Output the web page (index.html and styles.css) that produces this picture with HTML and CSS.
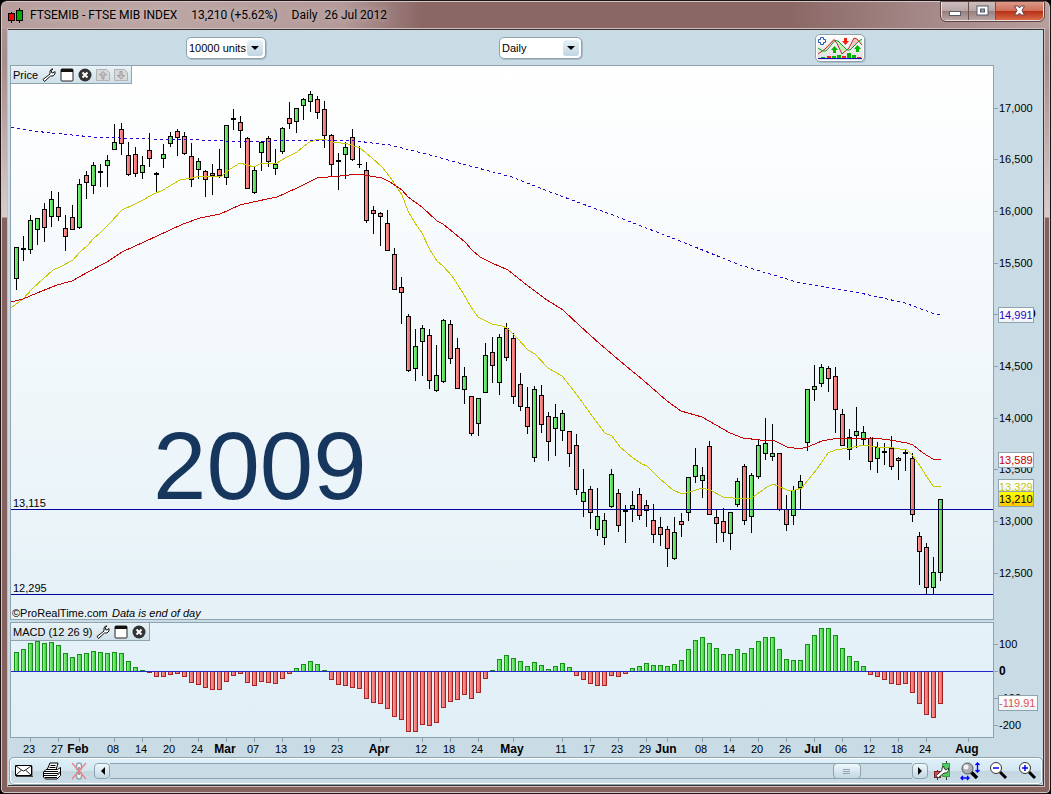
FILE: index.html
```html
<!DOCTYPE html>
<html lang="en">
<head>
<meta charset="utf-8">
<title>FTSEMIB - FTSE MIB INDEX</title>
<link rel="stylesheet" href="styles.css">
</head>
<body>
<div class="window">
  <header class="titlebar">
    <svg class="app-icon" width="16" height="16" viewBox="0 0 16 16" shape-rendering="crispEdges">
      <path d="M3 4h1v11H3zM11 0h1v15h-1z" fill="#000"/>
      <path d="M0 5h7v8H0zM8 2h7v11H8z" fill="#000"/>
      <path d="M1 6h5v6H1z" fill="#f00"/><path d="M9 3h5v9H9z" fill="#0a0"/>
    </svg>
    <h1 class="title"><span>FTSEMIB - FTSE MIB INDEX</span><span>13,210 (+5.62%)</span><span class="period">Daily</span><span class="day">26 Jul 2012</span></h1>
    <div class="window-buttons">
      <button class="win-btn minimize" aria-label="Minimize"><svg width="12" height="12"><rect x=".5" y="6.500" width="11" height="4" fill="#fff" stroke="#555d6e"/></svg></button>
      <button class="win-btn maximize" aria-label="Maximize"><svg width="13" height="12"><rect x="1" y="1" width="11" height="9" fill="#fff" stroke="#555d6e"/><rect x="4.500" y="4" width="4" height="3" fill="#a89898" stroke="#555d6e"/></svg></button>
      <button class="win-btn close" aria-label="Close"><svg width="13" height="12"><path d="M1.500 1h3.500l1.500 2L8 1h3.500L9 5.500l2.500 4.500H8L6.500 8 5 10H1.500L4 5.500z" fill="#fff" stroke="#6a4648"/></svg></button>
    </div>
  </header>

  <main class="client">
    <div class="toolbar">
      <label class="dropdown units"><select aria-label="Units"><option>10000 units</option></select><span class="arrow"></span></label>
      <label class="dropdown timeframe"><select aria-label="Timeframe"><option>Daily</option></select><span class="arrow"></span></label>
      <button class="indicator-btn" aria-label="Add indicator">
        <svg width="46" height="24" viewBox="0 0 46 24">
          <path d="M6 15L17 3.500l4 1.500-3 0-10 9zM33 14l4-12 3 1 3 4-2-1z" fill="#f8c0c2"/>
          <path d="M19 6l2-1 9 9-5 4zM1 12l5 3 3 0-5 3zM41 5l4-2v6z" fill="#bdf0bd"/>
          <path d="M1 18L8 13 17 3.500l3 4 5 10.500 7-6 5-10 3 1 5 6" fill="none" stroke="#c22a2a"/>
          <path d="M1 12l5 3h3l9-10.500 3 .5 9 9h3l9-9 3-2" fill="none" stroke="#1a9a2a"/>
          <path d="M17.500 10l3.500 4h-2v3h-3v-3h-2zM40.500 9l3.500 4h-2v3h-3v-3h-2z" fill="#00b400"/>
          <path d="M27 2h3v3h2l-3.500 4L25 5h2z" fill="#e21"/>
          <path d="M3.500 1.500h3v2h2v3h-2v2h-3v-2h-2v-3h2z" fill="#fff" stroke="#2458b8"/>
          <path d="M4 21h4v2H4zM15 20h4v3h-4zM20 19h4v4h-4zM30 17h4v6h-4zM35 19h4v4h-4z" fill="#00b000"/>
          <path d="M10 20h4v3h-4zM25 20h4v3h-4zM40 21h4v2h-4z" fill="#e22"/>
          <path d="M1 22.500h44" stroke="#1010c0"/>
        </svg>
      </button>
    </div>

    <section class="pane" aria-label="Price chart">
      <svg id="price" class="chart" viewBox="10 65 1033 557"></svg>
      <div class="pane-head">
        <span>Price</span>
        <button class="tool" aria-label="Settings"><svg width="14" height="14" viewBox="0 0 14 14"><path d="M9.500 1L8 3v3l-7 5.500 1.500 2L8.500 8H11l2-2V3.500L11 5 9.500 4.500V2.500L11 1z" fill="#fff" stroke="#111"/></svg></button>
        <button class="tool" aria-label="Maximize pane"><svg width="14" height="14" viewBox="0 0 14 14"><rect x="1" y="1" width="12" height="12" rx="1" fill="#fff" stroke="#222"/><path d="M1 1h12v3H1z" fill="#111"/></svg></button>
        <button class="tool" aria-label="Close pane"><svg width="14" height="14" viewBox="0 0 14 14"><circle cx="7" cy="7" r="6.500" fill="#333"/><path d="M4.500 4.500l5 5m0-5l-5 5" stroke="#fff" stroke-width="2"/></svg></button>
        <button class="tool" aria-label="Move up" disabled><svg width="14" height="14" viewBox="0 0 14 14"><path d="M.5 1.500h10l3 3v8H.5z" fill="#d8d8d8" stroke="#b0b4b6"/><path d="M7 3.500l3.500 3.500H8v4H6V7H3.500z" fill="#c6c8ca" stroke="#9a9ea0"/></svg></button>
        <button class="tool" aria-label="Move down" disabled><svg width="14" height="14" viewBox="0 0 14 14"><path d="M.5 1.500h10l3 3v8H.5z" fill="#d8d8d8" stroke="#b0b4b6"/><path d="M7 11l3.500-3.500H8v-4H6v4H3.500z" fill="#c6c8ca" stroke="#9a9ea0"/></svg></button>
      </div>
    </section>

    <section class="pane" aria-label="MACD chart">
      <svg id="macd" class="chart" viewBox="10 622 1033 116"></svg>
      <div class="pane-head">
        <span>MACD (12 26 9)</span>
        <button class="tool" aria-label="Settings"><svg width="14" height="14" viewBox="0 0 14 14"><path d="M9.500 1L8 3v3l-7 5.500 1.500 2L8.500 8H11l2-2V3.500L11 5 9.500 4.500V2.500L11 1z" fill="#fff" stroke="#111"/></svg></button>
        <button class="tool" aria-label="Maximize pane"><svg width="14" height="14" viewBox="0 0 14 14"><rect x="1" y="1" width="12" height="12" rx="1" fill="#fff" stroke="#222"/><path d="M1 1h12v3H1z" fill="#111"/></svg></button>
        <button class="tool" aria-label="Close pane"><svg width="14" height="14" viewBox="0 0 14 14"><circle cx="7" cy="7" r="6.500" fill="#333"/><path d="M4.500 4.500l5 5m0-5l-5 5" stroke="#fff" stroke-width="2"/></svg></button>
      </div>
    </section>

    <svg id="dates" class="chart" viewBox="10 738 1033 19"></svg>

    <footer class="bottombar">
      <button class="tool" aria-label="Mail"><svg width="18" height="14" viewBox="0 0 18 14"><path d="M.5 1.500h16v10H.5z" fill="#fff" stroke="#000"/><path d="M1 2l5.500 4L1 11M16 2l-5.500 4 5.500 5M6.500 6q2 2 4 0" fill="none" stroke="#222"/><path d="M1 12.500h17V2" fill="none" stroke="#444"/></svg></button>
      <button class="tool" aria-label="Print"><svg width="18" height="18" viewBox="0 0 18 18"><path d="M4 8L7 1h8l-2 7z" fill="#fff" stroke="#000"/><path d="M7.500 3.500h5M6.500 5.500h6" stroke="#000"/><path d="M3 7.500h11.500l3-2v8L14 17H2.500L.5 15v-5z" fill="#fff" stroke="#000"/><path d="M1 9.500h14M1 11.500h14l2-2M1 13.500h13l3-3M2 15.500h12" stroke="#000" fill="none"/></svg></button>
      <button class="tool" aria-label="Link windows" disabled><svg width="17" height="18" viewBox="0 0 17 18"><rect x="5.500" y="1" width="5" height="7" rx="2.500" fill="#eef5f8" stroke="#93a5af" stroke-width="1.500"/><rect x="5.500" y="10" width="5" height="7" rx="2.500" fill="#eef5f8" stroke="#93a5af" stroke-width="1.500"/><path d="M8 5v8" stroke="#93a5af" stroke-width="2"/><path d="M1 1l14 16M15 1L1 17" stroke="#f07f84" stroke-width="1.300"/></svg></button>
      <div class="scroller">
        <button class="scroll-btn" aria-label="Scroll left"><svg width="5" height="8"><path d="M5 0v8L1 4z"/></svg></button>
        <input class="scroll-track" type="range" min="0" max="1000" value="934" aria-label="Time position">
        <button class="scroll-btn" aria-label="Scroll right"><svg width="5" height="8"><path d="M0 0v8l4-4z"/></svg></button>
      </div>
      <div class="zoom-tools">
        <button class="tool" aria-label="Chart settings"><svg width="17" height="20" viewBox="0 0 17 20"><path d="M3.500 9v10M12.500 0v19" stroke="#333"/><rect x=".5" y="10.500" width="6" height="6" fill="#e44" stroke="#722"/><rect x="8.500" y="2.500" width="7" height="13" fill="#4fce5f" stroke="#3f9a4a"/><path d="M9.500 5L8 7v2.500L2 14.500l2 2.500 6-5h2.500l2-2.500V7L12 9l-1.500-1z" fill="#fff" stroke="#333"/></svg></button>
        <button class="tool" aria-label="Fit zoom"><svg width="20" height="20" viewBox="0 0 20 20"><path d="M11 11l6 6" stroke="#000" stroke-width="3.500"/><circle cx="7.500" cy="7.500" r="5.500" fill="#aab1b5" stroke="#555"/><circle cx="6" cy="6" r="2.500" fill="#f4f4f4"/><path d="M17.500 2v9M15.500 4l2-2 2 2M15.500 9l2 2 2-2M1 17h8M3 15l-2 2 2 2M7 15l2 2-2 2" fill="none" stroke="#00f" stroke-width="1.300"/></svg></button>
        <button class="tool" aria-label="Zoom out"><svg width="20" height="20" viewBox="0 0 20 20"><path d="M11 11l6 6" stroke="#000" stroke-width="3"/><circle cx="7" cy="7" r="5.500" fill="#fff" stroke="#333"/><path d="M4 7h6" stroke="#00f" stroke-width="1.500"/></svg></button>
        <button class="tool" aria-label="Zoom in"><svg width="20" height="20" viewBox="0 0 20 20"><path d="M11 11l6 6" stroke="#000" stroke-width="3"/><circle cx="7" cy="7" r="5.500" fill="#fff" stroke="#333"/><path d="M4 7h6M7 4v6" stroke="#00f" stroke-width="1.500"/></svg></button>
      </div>
    </footer>
  </main>
</div>
<script src="chart.js"></script>
</body>
</html>
```
FILE: styles.css
```css
* { box-sizing: border-box; }

body {
  margin: 0;
  background: #000;
  font: 11px/14px "Liberation Sans", Arial, sans-serif;
  color: #000;
}

button, select, input { font: inherit; margin: 0; padding: 0; color: inherit; }
button { border: 0; background: none; }

.window {
  min-height: 100vh;
  padding: 1px 6px 7px 7px;
  border: 1px solid #1c1414;
  border-radius: 7px 7px 5px 5px;
  box-shadow: inset 0 0 0 1px #d5c6c5;
  background: linear-gradient(#b39a99 0, #a68c8b 60px, #d9cccc 216px, #86625f 217px, #86625f 100%);
  background-clip: padding-box;
  display: flex;
  flex-direction: column;
}

.titlebar {
  height: 27px;
  margin: 0 -5px 0 -6px;
  padding-left: 6px;
  display: flex;
  align-items: flex-start;
  border-radius: 6px 6px 0 0;
  background: linear-gradient(90deg, #b79e9d 0, #bca6a5 160px, #b39a99 340px, #8a6765 420px, #8a6765 75%, #a48887 88%, #b79f9e 100%);
}
.app-icon { margin-top: 6px; }
.title {
  flex: 1;
  margin: 5px 0 0 6px;
  display: flex;
  font: 12px/17px Roboto, "Open Sans", sans-serif;
  white-space: pre;
}
.title span + span { margin-left: 14px; }
.title .day { margin-left: 7px; }
.title span { text-shadow: 0 0 6px #d9cbcb; }

.window-buttons {
  display: flex;
  margin-right: 5px;
  border: 1px solid #eadfdf;
  border-top: 0;
  border-radius: 0 0 5px 5px;
  outline: 1px solid #5d4443;
  overflow: hidden;
}
.win-btn {
  height: 18px;
  display: flex;
  align-items: center;
  justify-content: center;
  background: linear-gradient(#cdbfbe 0, #b8a5a4 50%, #967d7c 50%, #b8a4a3 100%);
}
.minimize, .maximize { width: 27px; border-right: 1px solid #6b5251; }
.close { width: 47px; background: linear-gradient(#dd9a89 0, #cf6e58 50%, #b52e14 50%, #d96a48 100%); }

.client {
  flex: 1;
  border: 1px solid #3d3231;
  border-width: 1px 1px 1px 0;
  outline: 1px solid #cdbdbc;
  background: #c9dbe4;
  display: flex;
  flex-direction: column;
  padding-left: 2px;
}

.toolbar {
  height: 35px;
  padding: 0 178px 0 176px;
  display: flex;
  justify-content: space-between;
  align-items: center;
}
.dropdown {
  height: 22px;
  display: flex;
  align-items: center;
  padding: 0 2px;
  border: 1px solid #8ea3ae;
  border-radius: 5px;
  box-shadow: 1px 1px 0 #a9bcc6;
  background: #fff;
}
.units { width: 80px; }
.timeframe { width: 83px; }
.dropdown select {
  flex: 1;
  min-width: 0;
  border: 0;
  background: none;
  appearance: none;
}
.arrow {
  width: 16px;
  height: 16px;
  display: flex;
  align-items: center;
  justify-content: center;
  border-radius: 3px;
  background: linear-gradient(#e7f2f8, #bfd6e3);
}
.arrow::before {
  content: "";
  border: 4px solid transparent;
  border-top-color: #000;
  border-bottom: 0;
}
.indicator-btn {
  width: 50px;
  height: 28px;
  display: flex;
  align-items: center;
  justify-content: center;
  border: 1px solid #8ea3ae;
  border-radius: 5px;
  box-shadow: 1px 1px 0 #a9bcc6, inset 0 0 0 1px #fff;
  background: linear-gradient(#fff, #ddd);
}

.pane { position: relative; }
.chart { display: block; width: 100%; height: auto; }
.pane-head {
  position: absolute;
  top: 0;
  left: 0;
  height: 19px;
  padding: 0 3px;
  display: flex;
  align-items: center;
  gap: 4px;
  border: 1px solid #8ea3ae;
  background: linear-gradient(#e9f3f8, #cfe0e9);
  white-space: nowrap;
}
.pane-head span { margin-left: -1px; }
.tool { display: flex; }

.chart text { font: 11px "Liberation Sans", Arial, sans-serif; fill: #000; }
.chart .strong { font-weight: bold; font-size: 12px; }
.chart .note { font-style: italic; }
.chart .year { font-size: 96px; fill: #17365d; }
.chart .tag-blue { fill: #2a00c8; }
.chart .tag-red { fill: #c80000; }
.chart .tag-yellow { fill: #c8c800; }
.chart .tag-macd { fill: #e05050; }

.bottombar {
  flex: 1;
  min-height: 28px;
  margin-left: -1px;
  padding: 0 4px 0 5px;
  display: flex;
  align-items: center;
  gap: 10px;
  border: 1px solid #8ea3ae;
  border-radius: 5px;
  box-shadow: inset 0 0 0 1px #fff;
  background: linear-gradient(#dff1fb 0, #d3e5ee 50%, #c4d7e1 50%, #cbdde6 100%);
}
.scroller {
  flex: 1;
  display: flex;
  margin: 0 -4px;
}
.scroll-btn {
  width: 16px;
  height: 16px;
  display: flex;
  align-items: center;
  justify-content: center;
  border: 1px solid #8ea3ae;
  border-radius: 4px;
  background: linear-gradient(#f0f8fc, #c3d8e3);
}
.scroll-track {
  flex: 1;
  min-width: 0;
  height: 16px;
  appearance: none;
  border: 1px solid #8ea3ae;
  border-width: 1px 0;
  background: #c9dbe4;
}
.scroll-track::-webkit-slider-thumb {
  appearance: none;
  width: 28px;
  height: 16px;
  border: 1px solid #8ea3ae;
  border-radius: 4px;
  background:
    repeating-linear-gradient(#8ea3ae 0 1px, transparent 1px 2px) center / 7px 5px no-repeat,
    linear-gradient(#f0f8fc, #c3d8e3);
}
.zoom-tools { display: flex; gap: 9px; }
```
FILE: chart.js
```js
const NS = "http://www.w3.org/2000/svg";
const FIRST = 16, STEP = 7;
const PLOT_RIGHT = 993;
const FRAME = "#8ea3ae";

function add(parent, name, attrs, text) {
  const el = document.createElementNS(NS, name);
  for (const key in attrs) el.setAttribute(key, attrs[key]);
  if (text !== undefined) el.textContent = text;
  parent.appendChild(el);
  return el;
}
const box = (p, x, y, width, height, fill, extra) =>
  add(p, "rect", { x, y, width, height, fill, "shape-rendering": "crispEdges", ...extra });

function gradient(svg, id, from, to, horizontal) {
  const g = add(svg, "linearGradient", horizontal ? { id } : { id, x2: 0, y2: 1 });
  add(g, "stop", { offset: 0, "stop-color": from });
  add(g, "stop", { offset: 1, "stop-color": to });
}
function panel(svg, top, bottom, fill) {
  box(svg, 10, top, PLOT_RIGHT - 9, bottom - top + 1, FRAME);
  box(svg, 11, top + 1, PLOT_RIGHT - 11, bottom - top - 1, fill);
}
function scaleLabel(svg, y, label, cls = "") {
  box(svg, PLOT_RIGHT + 1, y, 4, 1, FRAME);
  add(svg, "text", { x: 999, y: y + 4, class: cls }, label);
}
function tag(svg, y, label, cls, width = 36, fill = "url(#tagFill)") {
  box(svg, 998, y, width, 16, FRAME);
  box(svg, 999, y + 1, width - 2, 14, fill);
  add(svg, "text", { x: 999, y: y + 12, class: cls }, label);
}

// colour, high, body top, body bottom, low
const candles = `
G 247 247 279 290|D 236 248 250 261|G 215 220 250 254|G 218 218 230 245|R 203 209 228 242|G 191 199 217 227|R 192 207 217 221
R 215 228 237 251|R 205 217 230 230|G 179 184 228 229|R 171 175 183 199|G 162 165 186 194|D 164 171 173 187|G 155 160 166 187
G 124 142 150 150|R 123 129 144 155|R 142 155 175 176|R 147 154 174 177|G 156 165 173 179|R 133 150 159 167|D 172 173 175 193
G 144 154 159 168|G 132 136 144 147|R 129 131 138 156|R 132 136 154 155|R 143 156 180 187|G 158 161 170 179|R 170 171 180 197
R 164 173 176 195|R 149 169 176 178|G 125 125 178 185|D 109 118 120 130|R 116 122 131 148|R 137 138 189 189|G 167 170 193 194
G 141 142 153 171|R 136 138 162 167|G 149 164 169 175|G 127 128 152 154|R 102 118 124 129|G 108 108 122 133|G 98 99 106 120
G 91 94 102 112|R 96 99 113 119|R 101 109 136 148|R 134 135 165 177|D 153 160 162 190|G 142 147 155 179|R 129 137 160 161
D 146 164 165 168|R 162 170 221 223|R 206 210 214 234|R 212 213 217 246|R 210 223 251 251|R 248 254 290 290|R 277 287 293 324
R 314 316 371 372|G 329 346 369 381|G 325 328 342 376|R 329 335 381 389|G 345 375 391 392|G 319 320 382 383|R 320 324 359 364
R 338 348 389 389|G 367 376 390 404|R 396 396 434 436|G 398 398 424 436|G 343 355 393 393|R 337 352 366 383|G 334 337 383 395
R 323 328 358 361|R 333 338 397 404|R 373 384 407 411|R 387 407 427 434|G 386 389 458 462|R 385 395 425 433|R 412 416 442 461
G 404 417 429 456|G 410 413 431 441|R 431 431 454 467|R 434 445 490 495|G 469 492 502 517|R 486 489 513 529|G 488 516 530 536
G 513 520 538 545|G 469 474 507 508|R 489 493 526 532|D 505 510 512 543|G 491 505 509 522|R 488 494 516 520|R 500 505 511 527
R 504 520 535 543|R 517 527 535 546|R 526 529 549 567|G 517 532 559 560|R 513 521 525 537|G 477 477 513 521|G 448 465 477 483
G 467 475 481 498|R 441 446 515 515|R 510 517 524 543|R 508 521 533 542|G 512 512 534 550|G 478 481 505 507|R 464 466 521 525
G 473 475 517 533|G 439 445 477 479|G 418 443 454 460|G 424 453 457 461|R 453 453 510 511|R 495 509 525 531|G 486 490 516 525
G 475 481 488 510|G 389 389 443 451|G 365 386 390 401|G 364 367 384 387|R 366 368 379 392|R 367 376 410 433|R 409 414 446 446
G 429 437 450 460|G 407 431 436 448|G 426 432 440 446|R 437 438 462 470|G 442 447 459 473|D 443 451 453 465|R 436 448 467 470
R 457 458 461 480|D 449 452 454 471|R 453 458 515 522|R 532 536 552 585|R 543 547 588 594|G 557 572 588 594|G 499 499 573 581
`.trim().split(/[|\n]/).map(row => row.split(" "));

const averages = [
  ["#c8c800", "", "11,308 23,299 33,288 43,279 53,270 60,267 73,260 80,252 88,245 93,239 100,233 110,223 122,210 133,205 143,200 152,195 163,190 173,184 180,180 192,178 200,176 222,176 230,169 240,163 254,167 262,163 277,163 287,157 297,152 308,143 317,139 324,139 333,142 348,144 360,148 372,158 382,167 390,177 398,189 402,195 408,211 415,223 422,233 430,250 437,261 443,266 452,276 463,293 471,307 478,317 492,324 502,326 507,328 517,338 528,350 535,354 548,368 562,376 570,386 577,395 590,413 605,433 612,436 620,447 633,458 642,464 647,466 660,479 673,490 682,494 690,492 702,488 710,490 723,497 733,498 752,498 760,492 767,487 773,484 778,486 787,490 795,490 802,488 808,480 817,469 828,453 835,450 850,448 863,445 877,447 887,447 907,450 913,456 920,466 927,477 933,486 941,487"],
  ["#c80000", "", "11,302 23,299 37,293 57,285 72,281 88,272 107,262 122,252 133,247 157,236 183,224 200,218 220,214 240,205 253,202 277,197 297,188 317,178 340,176 358,174 370,176 382,178 390,182 402,190 408,197 422,207 437,221 443,224 465,242 472,250 480,257 492,263 508,270 528,286 547,300 563,310 580,326 600,344 620,361 643,380 667,401 681,411 702,417 730,433 743,438 760,440 773,440 787,447 800,449 810,446 822,441 833,439 873,438 890,440 907,443 913,445 923,453 933,459 941,460"],
  ["#2a00c8", "3 3", "11,127 33,131 52,133 72,135 93,137 120,138 150,139 200,140 223,141 273,141 307,140 357,141 372,143 390,145 430,155 470,166 512,177 545,190 580,203 610,214 680,241 740,265 800,283 860,293 905,303 935,314 941,315"]
];

const price = document.getElementById("price");
gradient(price, "sky", "#ffffff", "#e5f1f7");
gradient(price, "up", "#8cf38c", "#40d040", true);
gradient(price, "down", "#ff9c9c", "#e86464", true);
gradient(price, "tagFill", "#ffffff", "#eef4f7");
gradient(price, "tagGold", "#ffff00", "#ffc800");
panel(price, 65, 619, "url(#sky)");
add(price, "text", { x: 153, y: 499, class: "year" }, "2009");

candles.forEach(([kind, high, top, bottom, low], i) => {
  const x = FIRST + STEP * i;
  box(price, x, high, 1, low - high, "#000");
  box(price, x - 2, top, 5, bottom - top, "#000");
  if (kind !== "D") {
    box(price, x - 1, +top + 1, 3, bottom - top - 2, kind === "G" ? "url(#up)" : "url(#down)");
  }
});
for (const [stroke, dash, points] of averages) {
  add(price, "polyline", { points, fill: "none", stroke, "stroke-dasharray": dash, "shape-rendering": "crispEdges" });
}
for (const [y, label] of [[509, "13,115"], [594, "12,295"]]) {
  box(price, 11, y, PLOT_RIGHT - 11, 1, "#00009a");
  add(price, "text", { x: 13, y: y - 2 }, label);
}
add(price, "text", { x: 12, y: 617 }, "©ProRealTime.com");
add(price, "text", { x: 112, y: 617, class: "note" }, "Data is end of day");

scaleLabel(price, 108, "17,000");
scaleLabel(price, 159, "16,500");
scaleLabel(price, 211, "16,000");
scaleLabel(price, 263, "15,500");
scaleLabel(price, 314, "15,000", "strong");
scaleLabel(price, 366, "14,500");
scaleLabel(price, 418, "14,000");
scaleLabel(price, 469, "13,500");
scaleLabel(price, 521, "13,000");
scaleLabel(price, 573, "12,500");
tag(price, 307, "14,991", "tag-blue");
tag(price, 452, "13,589", "tag-red");
tag(price, 479, "13,329", "tag-yellow");
tag(price, 491, "13,210", "", 36, "url(#tagGold)");

// y of the outer end of each histogram bar
const ends = [
  652, 649, 643, 641, 643, 642, 645, 653, 657, 654, 653, 651, 652, 653, 652, 653, 661, 667, 670,
  673, 677, 677, 675, 674, 677, 683, 685, 688, 690, 690, 682, 676, 674, 683, 686, 682, 683, 684, 679, 674,
  668, 664, 661, 664, 670, 680, 685, 686, 688, 689, 699, 703, 704, 709, 717, 720, 732, 732, 725, 726,
  723, 708, 702, 700, 695, 699, 693, 679, 670, 659, 655, 658, 661, 666, 662, 665, 669, 666, 663, 667,
  676, 680, 684, 686, 686, 676, 677, 674, 668, 666, 663, 665, 665, 666, 664, 660, 649, 640, 637, 643,
  648, 654, 654, 649, 653, 648, 641, 637, 637, 649, 659, 660, 660, 644, 635, 628, 628, 635, 648, 656,
  661, 666, 675, 677, 680, 684, 685, 684, 693, 704, 715, 718, 704
];
const ZERO = 671;
const macd = document.getElementById("macd");
gradient(macd, "mist", "#e5f2f9", "#e0eef5");
panel(macd, 622, 737, "url(#mist)");
ends.forEach((end, i) => {
  const x = FIRST + STEP * i - 2;
  const up = end < ZERO;
  const top = up ? end : ZERO + 1;
  const height = up ? ZERO - end : end - ZERO - 1;
  box(macd, x, top, 5, height, up ? "#149014" : "#a82222");
  if (height > 1) box(macd, x + 1, up ? top + 1 : top, 3, height - 1, up ? "url(#up)" : "url(#down)");
});
box(macd, 11, ZERO, PLOT_RIGHT - 11, 1, "#2424d0");
scaleLabel(macd, 644, "100");
scaleLabel(macd, 671, "0", "strong");
scaleLabel(macd, 698, "-100");
scaleLabel(macd, 725, "-200");
tag(macd, 695, "-119.91", "tag-macd", 40);

const dates = document.getElementById("dates");
const days = [[30, "23"], [58, "27"], [79, "Feb"], [114, "08"], [142, "14"], [170, "20"], [198, "24"], [226, "Mar"],
  [254, "07"], [282, "13"], [310, "19"], [338, "23"], [380, "Apr"], [422, "12"], [450, "18"], [478, "24"], [513, "May"],
  [562, "11"], [590, "17"], [618, "23"], [646, "29"], [667, "Jun"], [702, "08"], [730, "14"], [758, "20"], [786, "26"],
  [814, "Jul"], [842, "06"], [870, "12"], [898, "18"], [926, "24"], [968, "Aug"]];
for (const [x, label] of days) {
  box(dates, x, 738, 1, 4, FRAME);
  add(dates, "text", { x: x - 1, y: 753, "text-anchor": "middle", class: isNaN(label) ? "strong" : "" }, label);
}
```
